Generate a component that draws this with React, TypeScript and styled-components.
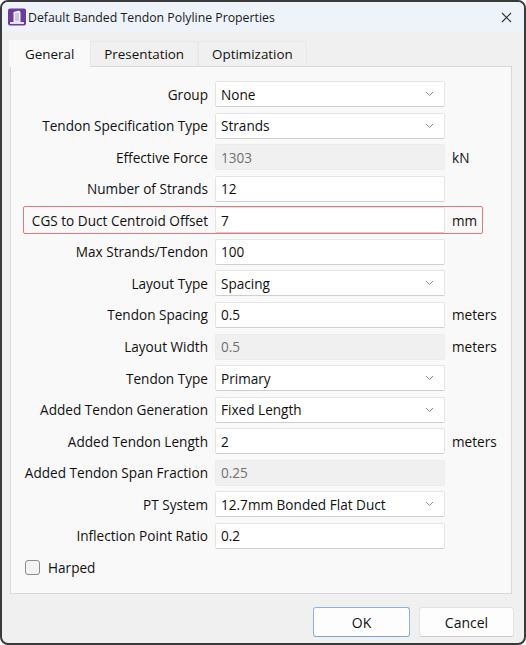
import React from "react";
import styled, { createGlobalStyle } from "styled-components";

const GlobalStyle = createGlobalStyle`
  html, body { margin: 0; padding: 0; background: #ffffff; }
  body { font-family: "Segoe UI", "Open Sans", "Noto Sans", sans-serif; }
  * { box-sizing: border-box; }
`;

const Window = styled.div`
  width: 526px;
  height: 645px;
  border: 2px solid #3a3a3a;
  border-radius: 8px;
  overflow: hidden;
  background: #f0f0f0;
  display: flex;
  flex-direction: column;
  color: #111111;
  font-size: 13.6px;
`;

const TitleBar = styled.div`
  height: 30px;
  flex: none;
  background: #eef3f9;
  display: flex;
  align-items: center;
  padding: 0 10px 0 5px;
  gap: 1px;
`;

const Title = styled.div`
  flex: 1;
  font-size: 12.3px;
  color: #1a1a1a;
`;

const Close = styled.div`
  width: 12px;
  height: 12px;
  display: flex;
  align-items: center;
  justify-content: center;
  margin-right: 2px;
`;

const Content = styled.div`
  flex: 1;
  display: flex;
  flex-direction: column;
  padding: 7px 10px 0 7px;
`;

const TabBar = styled.div`
  display: flex;
  align-items: flex-end;
  height: 27px;
`;

const Tab = styled.div<{ $active?: boolean }>`
  height: ${(p) => (p.$active ? "27px" : "25px")};
  padding: 0 ${(p) => (p.$active ? "15px" : "13px")};
  display: flex;
  align-items: center;
  justify-content: center;
  background: ${(p) => (p.$active ? "#f9f9f9" : "#f0f0f0")};
  border: 1px solid ${(p) => (p.$active ? "#f9f9f9" : "#e8e8e8")};
  border-bottom: none;
  font-size: 13.4px;
  color: #111111;
  margin-bottom: ${(p) => (p.$active ? "-1px" : "0")};
  position: relative;
  z-index: ${(p) => (p.$active ? 1 : 0)};
`;

const Panel = styled.div`
  margin-left: 1px;
  width: 502px;
  height: 528px;
  background: #f9f9f9;
  border: 1px solid #d9d9d9;
  padding: 14px 0 0 0;
  display: flex;
  flex-direction: column;
  gap: 5.57px;
`;

const Row = styled.div<{ $highlight?: boolean }>`
  display: grid;
  grid-template-columns: 197px 230px auto;
  column-gap: 7px;
  height: 26px;
  align-items: center;
  position: relative;
  &::after {
    content: "";
    display: ${(p) => (p.$highlight ? "block" : "none")};
    position: absolute;
    left: 12px;
    right: 28px;
    top: -1px;
    bottom: -1px;
    border: 1.5px solid #e8767a;
    border-radius: 2px;
    pointer-events: none;
  }
`;

const Label = styled.div`
  text-align: right;
  white-space: nowrap;
`;

const Field = styled.div<{ $disabled?: boolean; $select?: boolean }>`
  height: 26px;
  display: flex;
  align-items: center;
  padding: 0 10px 0 5px;
  background: ${(p) => (p.$disabled ? "#f0f0f0" : "#ffffff")};
  border: 1px solid ${(p) => (p.$disabled ? "#ececec" : "#e5e5e5")};
  border-bottom-color: ${(p) => (p.$disabled ? "#ececec" : "#cfcfcf")};
  border-radius: 2px;
  color: ${(p) => (p.$disabled ? "#707070" : "#111111")};
  justify-content: space-between;
`;

const Unit = styled.div`
  white-space: nowrap;
`;

const CheckRow = styled.div`
  display: flex;
  align-items: center;
  height: 26px;
  padding-left: 14px;
  gap: 8px;
`;

const CheckBox = styled.div`
  width: 15px;
  height: 15px;
  border: 1px solid #8c8c8c;
  border-radius: 3px;
  background: #f3f3f3;
`;

const Footer = styled.div`
  display: flex;
  justify-content: flex-end;
  gap: 9px;
  padding-top: 13px;
`;

const Button = styled.div<{ $primary?: boolean; $w: number }>`
  width: ${(p) => p.$w}px;
  height: 30px;
  display: flex;
  align-items: center;
  justify-content: center;
  background: #fdfdfd;
  border: 1px solid ${(p) => (p.$primary ? "#8ab4de" : "#e3e3e3")};
  border-bottom-color: ${(p) => (p.$primary ? "#7ba6d4" : "#cccccc")};
  border-radius: 3px;
  font-size: 14px;
  color: #111111;
`;

const Chevron = () => (
  <svg width="9" height="6" viewBox="0 0 9 6">
    <path d="M1 1 L4.5 4.5 L8 1" fill="none" stroke="#8a8a8a" strokeWidth="1" />
  </svg>
);

const AppIcon = () => (
  <svg width="20" height="18" viewBox="0 0 20 18">
    <rect x="1" y="0.5" width="18" height="17" rx="2" fill="#6a3d9a" />
    <rect x="3" y="14" width="14" height="2" fill="#e8e0f0" />
    <path d="M6.5 14 L6.5 4 L12 2.5 L13.5 4 L13.5 14 Z" fill="#f2eef7" />
    <path d="M8 6 H12 M8 8 H12 M8 10 H12 M8 12 H12" stroke="#9c84bd" strokeWidth="0.8" />
  </svg>
);

type RowDef = {
  label: string;
  value: string;
  select?: boolean;
  disabled?: boolean;
  unit?: string;
  highlight?: boolean;
};

const rows: RowDef[] = [
  { label: "Group", value: "None", select: true },
  { label: "Tendon Specification Type", value: "Strands", select: true },
  { label: "Effective Force", value: "1303", disabled: true, unit: "kN" },
  { label: "Number of Strands", value: "12" },
  { label: "CGS to Duct Centroid Offset", value: "7", unit: "mm", highlight: true },
  { label: "Max Strands/Tendon", value: "100" },
  { label: "Layout Type", value: "Spacing", select: true },
  { label: "Tendon Spacing", value: "0.5", unit: "meters" },
  { label: "Layout Width", value: "0.5", disabled: true, unit: "meters" },
  { label: "Tendon Type", value: "Primary", select: true },
  { label: "Added Tendon Generation", value: "Fixed Length", select: true },
  { label: "Added Tendon Length", value: "2", unit: "meters" },
  { label: "Added Tendon Span Fraction", value: "0.25", disabled: true },
  { label: "PT System", value: "12.7mm Bonded Flat Duct", select: true },
  { label: "Inflection Point Ratio", value: "0.2" },
];

export default function App() {
  return (
    <>
      <GlobalStyle />
      <Window>
        <TitleBar>
          <AppIcon />
          <Title>Default Banded Tendon Polyline Properties</Title>
          <Close>
            <svg width="11" height="11" viewBox="0 0 11 11">
              <path d="M1 1 L10 10 M10 1 L1 10" stroke="#333" strokeWidth="1.1" />
            </svg>
          </Close>
        </TitleBar>
        <Content>
          <TabBar>
            <Tab $active>General</Tab>
            <Tab>Presentation</Tab>
            <Tab>Optimization</Tab>
          </TabBar>
          <Panel>
            {rows.map((r) => (
              <Row key={r.label} $highlight={r.highlight}>
                <Label>{r.label}</Label>
                <Field $disabled={r.disabled} $select={r.select}>
                  <span>{r.value}</span>
                  {r.select && <Chevron />}
                </Field>
                <Unit>{r.unit ?? ""}</Unit>
              </Row>
            ))}
            <CheckRow>
              <CheckBox />
              <span>Harped</span>
            </CheckRow>
          </Panel>
          <Footer>
            <Button $primary $w={97}>OK</Button>
            <Button $w={95}>Cancel</Button>
          </Footer>
        </Content>
      </Window>
    </>
  );
}
